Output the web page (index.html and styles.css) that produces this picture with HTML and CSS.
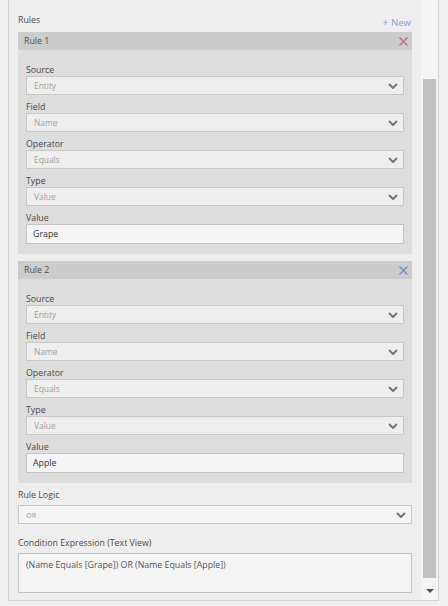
FILE: index.html
```html
<!DOCTYPE html>
<html>
<head>
<meta charset="utf-8">
<link rel="stylesheet" href="styles.css">
</head>
<body>
<div class="frame">
  <div class="content">
    <div class="rules-head">
      <span class="section-label">Rules</span>
      <span class="new-link"><span class="plus">+</span> New</span>
    </div>

    <div class="rule">
      <div class="rule-header">
        <span>Rule 1</span>
        <svg class="close close-red" width="9" height="9" viewBox="0 0 9 9"><path d="M0.5 0.5 L8.5 8.5 M8.5 0.5 L0.5 8.5"/></svg>
      </div>
      <div class="rule-body">
        <div class="field-label">Source</div>
        <div class="select"><span>Entity</span><svg class="chev" width="10" height="6" viewBox="0 0 10 6"><polyline points="1,1 5,5 9,1"/></svg></div>
        <div class="field-label">Field</div>
        <div class="select"><span>Name</span><svg class="chev" width="10" height="6" viewBox="0 0 10 6"><polyline points="1,1 5,5 9,1"/></svg></div>
        <div class="field-label">Operator</div>
        <div class="select"><span>Equals</span><svg class="chev" width="10" height="6" viewBox="0 0 10 6"><polyline points="1,1 5,5 9,1"/></svg></div>
        <div class="field-label">Type</div>
        <div class="select"><span>Value</span><svg class="chev" width="10" height="6" viewBox="0 0 10 6"><polyline points="1,1 5,5 9,1"/></svg></div>
        <div class="field-label">Value</div>
        <div class="input">Grape</div>
      </div>
    </div>

    <div class="rule">
      <div class="rule-header">
        <span>Rule 2</span>
        <svg class="close close-blue" width="9" height="9" viewBox="0 0 9 9"><path d="M0.5 0.5 L8.5 8.5 M8.5 0.5 L0.5 8.5"/></svg>
      </div>
      <div class="rule-body">
        <div class="field-label">Source</div>
        <div class="select"><span>Entity</span><svg class="chev" width="10" height="6" viewBox="0 0 10 6"><polyline points="1,1 5,5 9,1"/></svg></div>
        <div class="field-label">Field</div>
        <div class="select"><span>Name</span><svg class="chev" width="10" height="6" viewBox="0 0 10 6"><polyline points="1,1 5,5 9,1"/></svg></div>
        <div class="field-label">Operator</div>
        <div class="select"><span>Equals</span><svg class="chev" width="10" height="6" viewBox="0 0 10 6"><polyline points="1,1 5,5 9,1"/></svg></div>
        <div class="field-label">Type</div>
        <div class="select"><span>Value</span><svg class="chev" width="10" height="6" viewBox="0 0 10 6"><polyline points="1,1 5,5 9,1"/></svg></div>
        <div class="field-label">Value</div>
        <div class="input">Apple</div>
      </div>
    </div>

    <div class="section-label logic-label">Rule Logic</div>
    <div class="select select-light"><span class="small">OR</span><svg class="chev" width="10" height="6" viewBox="0 0 10 6"><polyline points="1,1 5,5 9,1"/></svg></div>

    <div class="section-label expr-label">Condition Expression (Text View)</div>
    <div class="textarea">(Name Equals [Grape]) OR (Name Equals [Apple])</div>
  </div>
  <div class="scrollbar">
    <div class="thumb"></div>
    <div class="arrow-down"></div>
  </div>
</div>
</body>
</html>
```

FILE: styles.css
```css
* { box-sizing: border-box; }
html, body { margin: 0; padding: 0; }
body {
  background: #f0f0f0;
  font-family: "Open Sans", "Noto Sans", sans-serif;
  font-size: 8.8px;
  color: #4a4a4a;
  width: 448px;
  height: 606px;
  overflow: hidden;
}
.frame {
  margin-left: 8px;
  width: 431px;
  height: 601px;
  border-left: 1px solid #d2d2d2;
  border-right: 1px solid #d2d2d2;
  border-bottom: 1px solid #d2d2d2;
  display: flex;
}
.content {
  width: 412px;
  background: #eeeeee;
  padding: 11px 9px 0 9px;
}
.rules-head {
  display: flex;
  justify-content: space-between;
  align-items: center;
  height: 18px;
  margin-bottom: 3px;
}
.section-label {
  line-height: 18px;
  color: #4a4a4a;
}
.new-link {
  color: #72abe2;
  margin-right: 1px;
  margin-top: 3px;
  font-size: 9.6px;
}
.plus { font-size: 11px; }
.rule {
  background: #dddddd;
  padding-bottom: 10px;
}
.rule + .rule { margin-top: 7px; }
.rule-header {
  height: 18px;
  background: #cccccc;
  display: flex;
  justify-content: space-between;
  align-items: center;
  padding: 0 4px 0 6px;
  color: #505050;
}
.close path { stroke-width: 1.2; fill: none; }
.close-red path { stroke: #b4737f; }
.close-blue path { stroke: #6f8ec4; }
.rule-body {
  padding: 8px 8px 0 8px;
}
.field-label {
  height: 18px;
  padding-top: 5px;
  line-height: 14px;
}
.select {
  height: 19px;
  border: 1px solid #c8c8c8;
  background: #eeeeee;
  display: flex;
  justify-content: space-between;
  align-items: center;
  padding: 0 5px 0 7px;
  color: #a0a0a0;
  font-size: 8.4px;
}
.chev polyline {
  fill: none;
  stroke: #767676;
  stroke-width: 2;
}
.input {
  height: 20px;
  border: 1px solid #c4c4c4;
  background: #f5f5f5;
  padding: 0 6px;
  line-height: 18px;
  color: #333;
}
.logic-label { margin-top: 4px; height: 18px; line-height: 16px; }
.select-light { background: #f4f4f4; }
.small { font-size: 7.4px; }
.expr-label { margin-top: 11px; height: 18px; line-height: 16px; }
.textarea {
  height: 40px;
  border: 1px solid #c4c4c4;
  background: #f4f4f4;
  padding: 3px 7px;
  line-height: 16px;
  color: #555;
}
.scrollbar {
  width: 17px;
  background: #f4f4f4;
  display: flex;
  flex-direction: column;
  align-items: center;
  padding-top: 79px;
}
.thumb {
  width: 13px;
  height: 499px;
  background: #c1c1c1;
}
.arrow-down {
  margin-top: 11px;
  width: 0;
  height: 0;
  border-left: 4px solid transparent;
  border-right: 4px solid transparent;
  border-top: 4px solid #505050;
}
```
